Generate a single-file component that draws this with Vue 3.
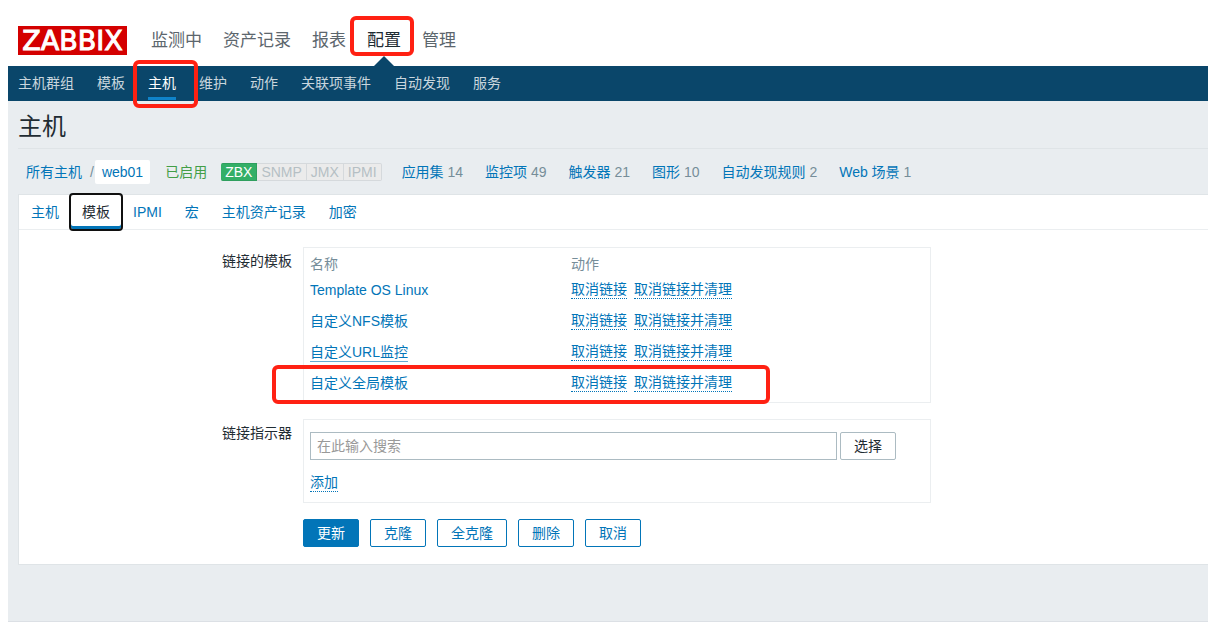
<script setup>
import { ref } from 'vue'

const mainNav = [
  { label: '监测中' },
  { label: '资产记录' },
  { label: '报表' },
  { label: '配置', active: true },
  { label: '管理' },
]
const subNav = [
  { label: '主机群组' },
  { label: '模板' },
  { label: '主机', active: true },
  { label: '维护' },
  { label: '动作' },
  { label: '关联项事件' },
  { label: '自动发现' },
  { label: '服务' },
]
const interfaces = ['ZBX', 'SNMP', 'JMX', 'IPMI']
const counters = [
  { label: '应用集', count: 14 },
  { label: '监控项', count: 49 },
  { label: '触发器', count: 21 },
  { label: '图形', count: 10 },
  { label: '自动发现规则', count: 2 },
  { label: 'Web 场景', count: 1 },
]
const tabs = ['主机', '模板', 'IPMI', '宏', '主机资产记录', '加密']
const currentTab = ref('模板')
const templates = [
  { name: 'Template OS Linux' },
  { name: '自定义NFS模板' },
  { name: '自定义URL监控', hovered: true },
  { name: '自定义全局模板' },
]
const search = ref('')
const actions = ['更新', '克隆', '全克隆', '删除', '取消']
</script>

<template>
  <div class="page">
    <header class="top">
      <a class="logo" href="#">ZABBIX</a>
      <nav class="main-nav">
        <a v-for="n in mainNav" :key="n.label" href="#" :class="{ active: n.active }">
          {{ n.label }}<span v-if="n.active" class="mark mark-main"></span>
        </a>
      </nav>
    </header>
    <nav class="sub-nav">
      <a v-for="n in subNav" :key="n.label" href="#" :class="{ active: n.active }">
        {{ n.label }}<span v-if="n.active" class="mark mark-sub"></span>
      </a>
    </nav>

    <main class="content">
      <h1>主机</h1>
      <div class="crumbs">
        <div class="path">
          <a href="#">所有主机</a>
          <span class="slash">/</span>
          <a class="host" href="#">web01</a>
        </div>
        <span class="enabled">已启用</span>
        <div class="interfaces">
          <span v-for="i in interfaces" :key="i" :class="{ on: i === 'ZBX' }">{{ i }}</span>
        </div>
        <div class="counters">
          <span v-for="c in counters" :key="c.label"><a href="#">{{ c.label }}</a> {{ c.count }}</span>
        </div>
      </div>

      <section class="panel">
        <div class="tabs" role="tablist">
          <button
            v-for="t in tabs"
            :key="t"
            type="button"
            role="tab"
            :aria-selected="t === currentTab"
            :class="{ active: t === currentTab }"
            @click="currentTab = t"
          >{{ t }}</button>
        </div>

        <form class="form" @submit.prevent>
          <span id="linked-label" class="label">链接的模板</span>
          <div class="box linked">
            <table aria-labelledby="linked-label">
              <thead>
                <tr><th>名称</th><th>动作</th></tr>
              </thead>
              <tbody>
                <tr v-for="t in templates" :key="t.name">
                  <td><a class="template" href="#" :class="{ hovered: t.hovered }">{{ t.name }}</a></td>
                  <td>
                    <div class="links">
                      <button type="button" class="dotted">取消链接</button>
                      <button type="button" class="dotted">取消链接并清理</button>
                    </div>
                  </td>
                </tr>
              </tbody>
            </table>
            <span class="mark mark-row"></span>
          </div>

          <label class="label" for="template-search">链接指示器</label>
          <div class="box indicator">
            <div class="search">
              <input id="template-search" v-model="search" type="text" placeholder="在此输入搜索" />
              <button type="button" class="btn grey">选择</button>
            </div>
            <button type="button" class="dotted">添加</button>
          </div>

          <div class="actions">
            <button v-for="(a, i) in actions" :key="a" type="button" class="btn" :class="{ primary: i === 0 }">{{ a }}</button>
          </div>
        </form>
      </section>
    </main>
  </div>
</template>

<style>
body {
  margin: 0;
  background: #fff;
}
</style>

<style scoped>
.page {
  display: flex;
  flex-direction: column;
  box-sizing: border-box;
  min-height: calc(100vh - 4px);
  margin: 0 8px 4px;
  font-family: "Liberation Sans", "Noto Sans CJK SC", sans-serif;
  font-size: 14px;
  line-height: 20px;
  color: #1f2c33;
}
a {
  color: #0275b8;
  text-decoration: none;
}
button,
input {
  font: inherit;
}
.top {
  display: flex;
  align-items: flex-end;
  height: 66px;
  padding-left: 10px;
  box-sizing: border-box;
}
.logo {
  width: 109px;
  height: 29px;
  margin-bottom: 11px;
  background: #d40000;
  color: #fff;
  font: 27px/30px "DejaVu Sans", sans-serif;
  text-align: center;
  -webkit-text-stroke: 1px #fff;
}
.main-nav {
  display: flex;
  gap: 21px;
  height: 52px;
  margin-left: 24px;
}
.main-nav a {
  position: relative;
  color: #5c666d;
  font-size: 17px;
  line-height: 54px;
}
.main-nav a.active {
  color: #1f2c33;
}
.main-nav a.active::after {
  content: "";
  position: absolute;
  left: 50%;
  bottom: 0;
  margin-left: -10px;
  border: 10px solid transparent;
  border-top: 0;
  border-bottom-color: #0a466a;
}
.mark {
  position: absolute;
  z-index: 2;
  box-sizing: border-box;
  border: 4px solid #ff2113;
  border-radius: 6px;
  pointer-events: none;
}
.mark-main {
  inset: 2px -13px 10px -17px;
}
.sub-nav {
  display: flex;
  gap: 23px;
  height: 35px;
  padding-left: 10px;
  background: #0a466a;
}
.sub-nav a {
  position: relative;
  color: #c9d6de;
  line-height: 34px;
}
.sub-nav a.active {
  color: #fff;
}
.sub-nav a.active::after {
  content: "";
  position: absolute;
  inset: auto 0 1px;
  height: 3px;
  background: #0f83c9;
}
.mark-sub {
  inset: -6px -22px -7px -15px;
}
.content {
  flex: 1;
  padding-left: 10px;
  background: #e9edf0;
  border-bottom: 1px solid #dce0e5;
}
h1 {
  margin: 0;
  height: 47px;
  border-bottom: 1px solid #dfe4e7;
  font-size: 24px;
  font-weight: 400;
  line-height: 52px;
}
.crumbs {
  display: flex;
  align-items: center;
  height: 45px;
  padding-left: 8px;
  white-space: nowrap;
}
.path {
  display: flex;
  align-items: center;
}
.slash {
  margin: 0 1px 0 8px;
  color: #768d99;
}
.host {
  padding: 2px 7px;
  background: #fff;
  border-radius: 2px;
}
.enabled {
  margin-left: 15px;
  color: #429e47;
}
.interfaces {
  display: flex;
  margin-left: 14px;
  line-height: 16px;
  color: #b5bfc4;
}
.interfaces span {
  padding: 0 4px;
  border: 1px solid #d5d9dc;
  border-left-width: 0;
  background: #ebebeb;
}
.interfaces span.on {
  background: #34af67;
  border-color: #2f9f5e;
  border-radius: 2px 0 0 2px;
  color: #fff;
}
.interfaces span:last-child {
  border-radius: 0 2px 2px 0;
}
.counters {
  display: flex;
  gap: 22px;
  margin-left: 20px;
  color: #768d99;
}
.panel {
  background: #fff;
  border: 1px solid #dfe4e7;
  border-right: 0;
}
.tabs {
  display: flex;
  gap: 1px;
  height: 34px;
  padding-left: 1px;
  border-bottom: 1px solid #ebeef0;
}
.tabs button {
  padding: 0 11px;
  border: 0;
  background: none;
  color: #0275b8;
}
.tabs button.active {
  color: #1f2c33;
  box-shadow: inset 0 -3px #0275b8;
  outline: 2px solid #101010;
  border-radius: 2px;
}
.form {
  display: grid;
  grid-template-columns: 273px minmax(0, 628px);
  column-gap: 11px;
  row-gap: 16px;
  padding: 17px 0;
}
.label {
  padding-top: 4px;
  text-align: right;
}
.box {
  position: relative;
  box-sizing: border-box;
  border: 1px solid #ebeef0;
}
.linked {
  padding: 4px 6px;
}
table {
  width: 100%;
  border-collapse: collapse;
  table-layout: fixed;
}
th,
td {
  padding: 0;
  text-align: left;
  font-weight: 400;
}
th:first-child {
  width: 261px;
}
th {
  height: 23px;
  color: #768d99;
}
td {
  height: 31px;
}
tbody tr:first-child td {
  height: 30px;
}
.links {
  display: flex;
  gap: 7px;
}
.dotted,
.template {
  display: inline-block;
  padding: 0;
  border: 0 solid transparent;
  border-bottom-width: 1px;
  background: none;
  line-height: 17px;
}
.dotted {
  border-bottom: 1px dotted #0275b8;
  color: #0275b8;
}
.template {
  vertical-align: middle;
}
.template.hovered {
  border-bottom-color: #67acd4;
}
.mark-row {
  inset: auto 160px -2px -32px;
  height: 39px;
}
.indicator {
  padding: 12px 34px 10px 6px;
}
.search {
  display: flex;
  gap: 3px;
  margin-bottom: 12px;
}
input {
  flex: 1;
  min-width: 0;
  height: 28px;
  box-sizing: border-box;
  padding: 0 6px;
  border: 1px solid #acbbc2;
  border-radius: 0;
  background: #fff;
  color: #1f2c33;
}
input::placeholder {
  color: #999;
}
.btn {
  height: 28px;
  padding: 0 13px;
  border: 1px solid #0275b8;
  border-radius: 2px;
  background: #fff;
  color: #0275b8;
  line-height: 26px;
}
.btn.grey {
  border-color: #acbbc2;
  color: #1f2c33;
}
.btn.primary {
  background: #0275b8;
  color: #fff;
}
.actions {
  grid-column: 2;
  display: flex;
  gap: 11px;
}
</style>
